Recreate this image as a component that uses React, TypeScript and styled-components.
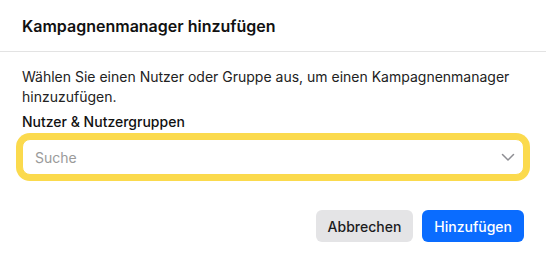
import React from "react"
import styled, { createGlobalStyle } from "styled-components"

const GlobalStyle = createGlobalStyle`
  html, body {
    margin: 0;
    padding: 0;
    background: #ffffff;
  }
  body {
    font-family: Inter, "Noto Sans", sans-serif;
    -webkit-font-smoothing: antialiased;
  }
  * {
    box-sizing: border-box;
  }
`

let Dialog = styled.div`
  width: 546px;
  height: 256px;
  background: #ffffff;
  display: flex;
  flex-direction: column;
`

let Header = styled.div`
  height: 52px;
  display: flex;
  align-items: center;
  padding: 0 22px;
  border-bottom: 1px solid #e3e3e3;
`

let Title = styled.h2`
  margin: 0;
  font-size: 16px;
  font-weight: 600;
  color: #111111;
`

let Body = styled.div`
  padding: 15px 22px 0;
  display: flex;
  flex-direction: column;
`

let Description = styled.p`
  margin: 0;
  font-size: 14px;
  line-height: 20px;
  color: #222222;
`

let Label = styled.label`
  margin-top: 5px;
  font-size: 14px;
  font-weight: 500;
  line-height: 20px;
  color: #111111;
`

let SelectBox = styled.div`
  margin-top: 7px;
  height: 36px;
  display: flex;
  align-items: center;
  justify-content: space-between;
  padding: 0 8px 0 12px;
  border: 1px solid #fbd94c;
  border-radius: 8px;
  box-shadow: 0 0 0 6px #fbda4d;
  background: #ffffff;
`

let Placeholder = styled.span`
  font-size: 14px;
  color: #9a9a9a;
`

let Chevron = styled.svg`
  width: 14px;
  height: 14px;
  color: #8e8e93;
`

let Footer = styled.div`
  margin-top: auto;
  padding: 0 22px 14px;
  display: flex;
  justify-content: flex-end;
  gap: 9px;
`

let Button = styled.button<{ $primary?: boolean }>`
  height: 32px;
  padding: 0 12px;
  border: none;
  border-radius: 6px;
  font-family: Inter, "Noto Sans", sans-serif;
  font-size: 14px;
  font-weight: 500;
  cursor: pointer;
  background: ${p => (p.$primary ? "#0a6cff" : "#e4e4e6")};
  color: ${p => (p.$primary ? "#ffffff" : "#1c1c1e")};
`

export default function App() {
  return (
    <>
      <GlobalStyle />
      <Dialog>
        <Header>
          <Title>Kampagnenmanager hinzufügen</Title>
        </Header>
        <Body>
          <Description>
            Wählen Sie einen Nutzer oder Gruppe aus, um einen Kampagnenmanager
            hinzuzufügen.
          </Description>
          <Label>Nutzer &amp; Nutzergruppen</Label>
          <SelectBox>
            <Placeholder>Suche</Placeholder>
            <Chevron viewBox="0 0 14 14" fill="none" stroke="currentColor" strokeWidth="1.5" strokeLinecap="round" strokeLinejoin="round">
              <path d="M1.5 4.5l5.5 5.5 5.5-5.5" />
            </Chevron>
          </SelectBox>
        </Body>
        <Footer>
          <Button>Abbrechen</Button>
          <Button $primary>Hinzufügen</Button>
        </Footer>
      </Dialog>
    </>
  )
}
